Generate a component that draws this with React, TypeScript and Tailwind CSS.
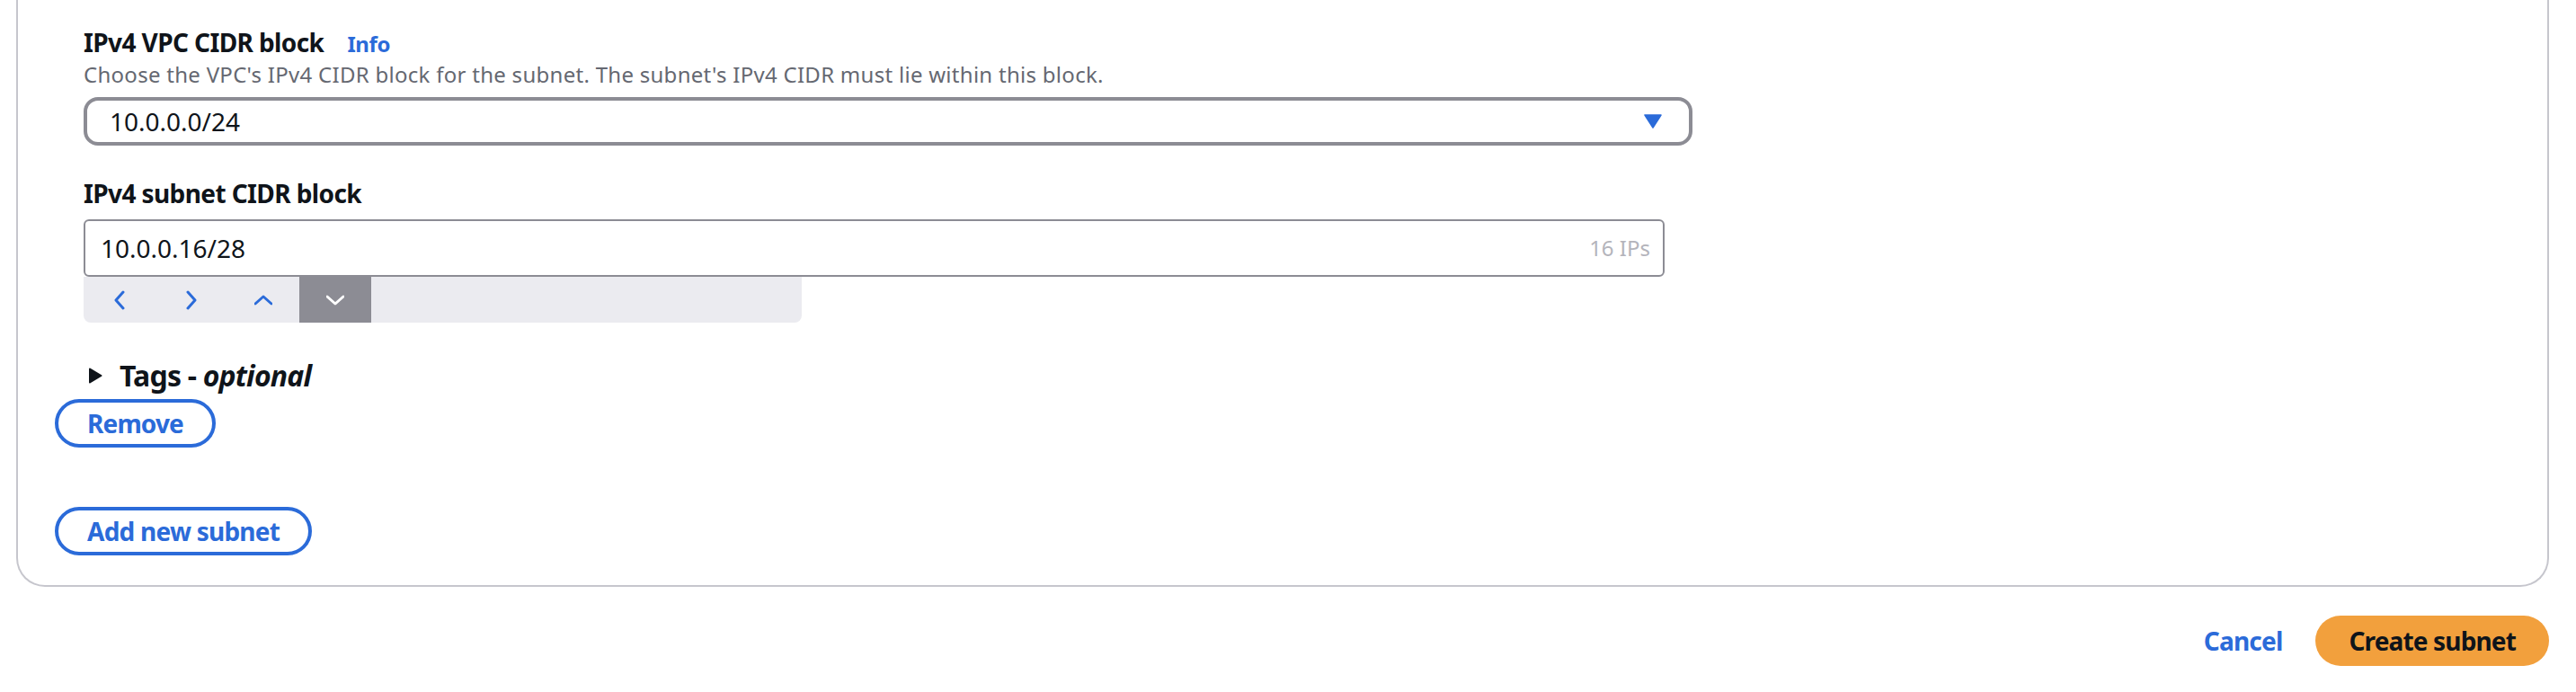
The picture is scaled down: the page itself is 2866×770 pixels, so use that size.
import React from "react";

const BLUE = "#2b6bd9";

function Chevron({ dir, color }: { dir: "left" | "right" | "up" | "down"; color: string }) {
  const paths: Record<string, string> = {
    left: "M12 2 L4 11 L12 20",
    right: "M4 2 L12 11 L4 20",
    up: "M1 10 L10 2 L19 10",
    down: "M1 2 L10 10 L19 2",
  };
  const vb = dir === "left" || dir === "right" ? "0 0 16 22" : "0 0 20 12";
  const cls = dir === "left" || dir === "right" ? "w-[16px] h-[22px]" : "w-[20px] h-[12px]";
  return (
    <svg viewBox={vb} className={cls} fill="none" stroke={color} strokeWidth={3} strokeLinecap="round" strokeLinejoin="round">
      <path d={paths[dir]} />
    </svg>
  );
}

export default function App() {
  return (
    <div className="min-h-[770px] w-[2866px] bg-white font-['Noto_Sans','Open_Sans',sans-serif] text-[#0f141a]">
      <div className="ml-[18px] w-[2818px] rounded-b-[32px] border-x-2 border-b-2 border-[#c6c6cd] pl-[41px] pt-[27px] pb-[33px]">
        <div className="pl-[32px]">
          <div className="flex h-[40px] items-baseline gap-[26px]">
            <span className="text-[28px] font-bold leading-[40px] tracking-[-0.6px]">IPv4 VPC CIDR block</span>
            <span className="text-[24px] font-bold leading-[40px] tracking-[-0.4px]" style={{ color: BLUE }}>Info</span>
          </div>
          <p className="text-[24px] leading-[32px] tracking-[0.28px] text-[#656871]">
            Choose the VPC's IPv4 CIDR block for the subnet. The subnet's IPv4 CIDR must lie within this block.
          </p>
          <div className="mt-[9px] flex h-[54px] w-[1790px] items-center justify-between rounded-[16px] border-4 border-[#8c8c94] pl-[25px] pr-[30px]">
            <span className="text-[28px] leading-[40px]">10.0.0.0/24</span>
            <svg viewBox="0 0 20 16" className="h-[16px] w-[20px]">
              <path d="M1 1 H19 L10 15 Z" fill={BLUE} stroke={BLUE} strokeWidth={1.5} strokeLinejoin="round" />
            </svg>
          </div>

          <div className="mt-[33px] text-[28px] font-bold leading-[40px] tracking-[-0.6px]">IPv4 subnet CIDR block</div>
          <div className="mt-[9px] flex h-[64px] w-[1759px] items-center justify-between rounded-[6px] border-2 border-[#8c8c94] pl-[17px] pr-[14px]">
            <span className="text-[28px] leading-[40px]">10.0.0.16/28</span>
            <span className="text-[24px] leading-[32px] text-[#b4b4bb]">16 IPs</span>
          </div>
          <div className="flex h-[51px] w-[799px] rounded-b-[8px] bg-[#ebebf0]">
            <div className="flex w-[80px] items-center justify-center">
              <Chevron dir="left" color={BLUE} />
            </div>
            <div className="flex w-[80px] items-center justify-center">
              <Chevron dir="right" color={BLUE} />
            </div>
            <div className="flex w-[80px] items-center justify-center">
              <Chevron dir="up" color={BLUE} />
            </div>
            <div className="flex w-[80px] items-center justify-center bg-[#8c8c94]">
              <Chevron dir="down" color="#ffffff" />
            </div>
          </div>

          <div className="mt-[37px] flex h-[44px] items-center pl-[5px]">
            <svg viewBox="0 0 16 18" className="h-[18px] w-[16px]">
              <path d="M2 1.5 L14.5 9 L2 16.5 Z" fill="#0f141a" stroke="#0f141a" strokeWidth={2} strokeLinejoin="round" />
            </svg>
            <span className="ml-[19px] text-[32px] font-bold leading-[44px] tracking-[-0.8px]">
              Tags - <span className="italic">optional</span>
            </span>
          </div>
        </div>

        <button
          className="mt-[4px] flex h-[54px] items-center rounded-full border-4 bg-white px-[32px] text-[28px] font-bold leading-[40px] tracking-[-0.85px]"
          style={{ borderColor: BLUE, color: BLUE }}
        >
          Remove
        </button>

        <button
          className="mt-[66px] flex h-[54px] items-center rounded-full border-4 bg-white px-[32px] text-[28px] font-bold leading-[40px] tracking-[-0.75px]"
          style={{ borderColor: BLUE, color: BLUE }}
        >
          Add new subnet
        </button>
      </div>

      <div className="mt-[32px] flex items-center justify-end pr-[30px]">
        <button className="text-[28px] font-bold leading-[40px] tracking-[-0.8px]" style={{ color: BLUE }}>
          Cancel
        </button>
        <button className="ml-[37px] flex h-[56px] items-center rounded-full bg-[#f2a03d] px-[37px] text-[28px] font-bold leading-[40px] tracking-[-0.85px] text-[#0f141a]">
          Create subnet
        </button>
      </div>
    </div>
  );
}
